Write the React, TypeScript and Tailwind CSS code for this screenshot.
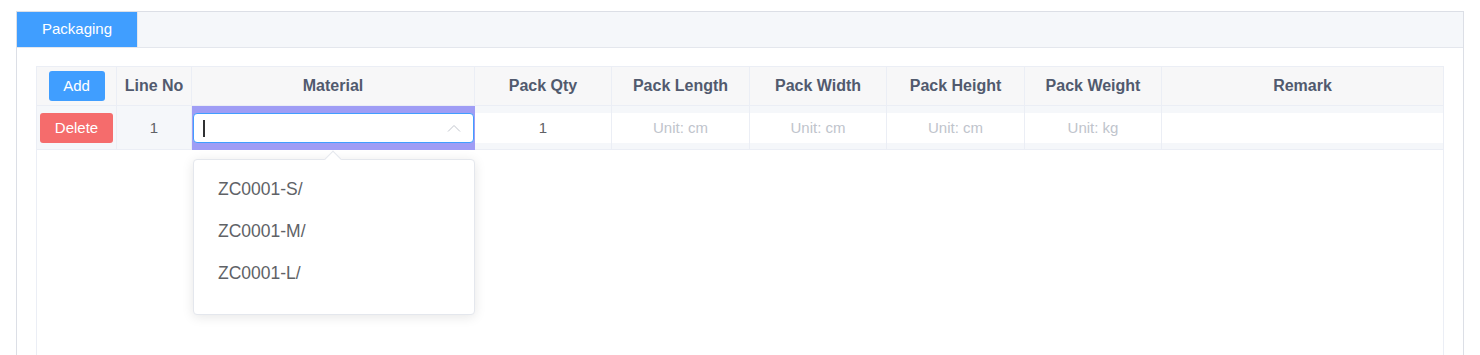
import React from "react";

const font = { fontFamily: '"Liberation Sans", Arial, sans-serif' };

function UnitCell({ text, last }: { text: string; last?: boolean }) {
  return (
    <div className={`flex items-center py-[7px] ${last ? "" : "border-r border-[#ebeef5]"}`}>
      <div className="w-full h-[30px] bg-white flex items-center justify-center text-[15px] text-[#c0c4cc]">
        {text}
      </div>
    </div>
  );
}

export default function App() {
  const headers = ["Pack Qty", "Pack Length", "Pack Width", "Pack Height", "Pack Weight"];
  return (
    <div className="w-[1480px] h-[355px] bg-white overflow-hidden pl-4 pt-[11px]" style={font}>
      <div className="w-[1448px] h-[400px] border border-[#dcdfe6] bg-white">
        {/* tab header */}
        <div className="h-[36px] bg-[#f5f7fa] border-b border-[#e4e7ed] flex">
          <div className="w-[120px] h-full bg-[#409eff] text-white text-[15px] flex items-center justify-center">
            Packaging
          </div>
          <div className="w-px h-full bg-[#e4e7ed]" />
        </div>
        {/* content */}
        <div className="pt-[18px] px-[19px]">
          <div className="relative border border-[#ebeef5] h-[400px]">
            {/* header row */}
            <div className="grid grid-cols-[80px_75px_283px_137px_138px_137px_138px_137px_281px] h-[39px] bg-[#f7f7f8] border-b border-[#ebeef5]">
              <div className="flex items-center justify-center border-r border-[#ebeef5]">
                <div className="w-[56px] h-[30px] bg-[#409eff] rounded-[3px] text-white text-[15px] flex items-center justify-center">
                  Add
                </div>
              </div>
              <div className="flex items-center justify-center border-r border-[#ebeef5] text-[16px] font-bold text-[#515a6e]">
                Line No
              </div>
              <div className="flex items-center justify-center border-r border-[#ebeef5] text-[16px] font-bold text-[#515a6e]">
                Material
              </div>
              {headers.map((h) => (
                <div
                  key={h}
                  className="flex items-center justify-center border-r border-[#ebeef5] text-[16px] font-bold text-[#515a6e]"
                >
                  {h}
                </div>
              ))}
              <div className="flex items-center justify-center text-[16px] font-bold text-[#515a6e]">Remark</div>
            </div>
            {/* body row */}
            <div className="grid grid-cols-[80px_75px_283px_137px_138px_137px_138px_137px_281px] h-[44px] bg-[#f5f7fa] border-b border-[#ebeef5]">
              <div className="flex items-center pl-[3px] border-r border-[#ebeef5]">
                <div className="w-[73px] h-[30px] bg-[#f56c6c] rounded-[3px] text-white text-[15px] flex items-center justify-center">
                  Delete
                </div>
              </div>
              <div className="flex items-center justify-center border-r border-[#ebeef5] text-[15px] text-[#606266]">
                1
              </div>
              <div className="flex items-center px-px bg-[#9f9df5]">
                <div className="w-full h-[30px] bg-white border border-[#409eff] rounded-[4px] flex items-center pl-[9px] pr-[12px]">
                  <div className="w-[2px] h-[17px] bg-[#303133]" />
                  <div className="flex-1" />
                  <svg width="14" height="8" viewBox="0 0 14 8" fill="none">
                    <path d="M1 7.5 L7 1.5 L13 7.5" stroke="#c0c4cc" strokeWidth="1" />
                  </svg>
                </div>
              </div>
              <div className="flex items-center py-[7px] border-r border-[#ebeef5]">
                <div className="w-full h-[30px] bg-white flex items-center justify-center text-[15px] text-[#606266]">
                  1
                </div>
              </div>
              <UnitCell text="Unit: cm" />
              <UnitCell text="Unit: cm" />
              <UnitCell text="Unit: cm" />
              <UnitCell text="Unit: kg" />
              <UnitCell text="" last />
            </div>

            {/* dropdown */}
            <div className="absolute left-[156px] top-[92px] w-[282px] h-[156px] bg-white border border-[#e4e7ed] rounded-[4px] shadow-[0_2px_12px_0_rgba(0,0,0,0.1)] py-[8px]">
              <div className="absolute -top-[7px] left-[133px] w-[12px] h-[12px] bg-white border-l border-t border-[#e4e7ed] rotate-45" />
              {["ZC0001-S/", "ZC0001-M/", "ZC0001-L/"].map((t) => (
                <div key={t} className="h-[42px] flex items-center pl-[24px] text-[17.5px] text-[#606266]">
                  {t}
                </div>
              ))}
            </div>
          </div>
        </div>
      </div>
    </div>
  );
}
